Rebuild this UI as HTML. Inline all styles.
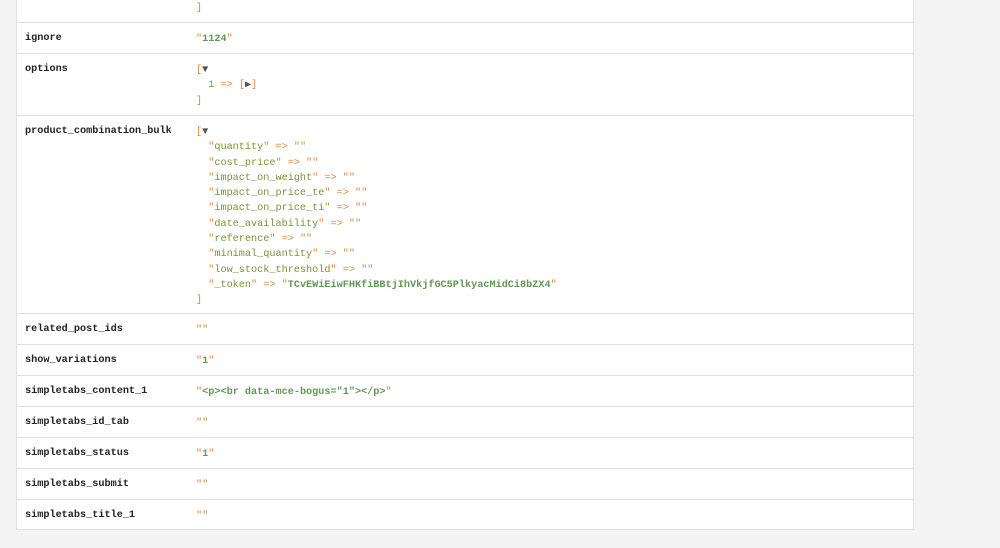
<!DOCTYPE html>
<html><head><style>
body{margin:0;width:1000px;height:548px;background:#f3f3f3;position:relative;overflow:hidden;font-family:"Liberation Mono",monospace;font-size:10.2px;}
.t{position:absolute;left:16px;top:-1px;width:896px;height:530px;background:#fff;border:1px solid #e2e2e2;border-top:none;}
.r{position:absolute;left:0;width:896px;border-top:1px solid #e2e2e2;}
.k{position:absolute;left:8px;font-weight:bold;color:#222;}
.v{position:absolute;left:179px;line-height:15.3px;color:#d9883f;white-space:pre;}
.s{color:#629755;font-weight:bold}
.ks{color:#789339}
.i{color:#6a9f3b}
.a{color:#555}
</style></head><body>
<div class="t">
<div class="v" style="top:2px">]</div>
<div class="r" style="top:23px;height:31px"><div class="k" style="top:10px">ignore</div><div class="v" style="top:9px">"<span class="s">1124</span>"</div></div>
<div class="r" style="top:54px;height:62px"><div class="k" style="top:10px">options</div><div class="v" style="top:9px">[<span class="a">▼</span>
  <span class="i">1</span> => [<span class="a">▶</span>]
]</div></div>
<div class="r" style="top:116px;height:198px"><div class="k" style="top:10px">product_combination_bulk</div><div class="v" style="top:9px">[<span class="a">▼</span>
  "<span class="ks">quantity</span>" => ""
  "<span class="ks">cost_price</span>" => ""
  "<span class="ks">impact_on_weight</span>" => ""
  "<span class="ks">impact_on_price_te</span>" => ""
  "<span class="ks">impact_on_price_ti</span>" => ""
  "<span class="ks">date_availability</span>" => ""
  "<span class="ks">reference</span>" => ""
  "<span class="ks">minimal_quantity</span>" => ""
  "<span class="ks">low_stock_threshold</span>" => ""
  "<span class="ks">_token</span>" => "<span class="s">TCvEWiEiwFHKfiBBtjIhVkjfGC5PlkyacMidCi8bZX4</span>"
]</div></div>
<div class="r" style="top:314px;height:31px"><div class="k" style="top:10px">related_post_ids</div><div class="v" style="top:9px">""</div></div>
<div class="r" style="top:345px;height:31px"><div class="k" style="top:10px">show_variations</div><div class="v" style="top:9px">"<span class="s">1</span>"</div></div>
<div class="r" style="top:376px;height:31px"><div class="k" style="top:10px">simpletabs_content_1</div><div class="v" style="top:9px">"<span class="s">&lt;p&gt;&lt;br data-mce-bogus="1"&gt;&lt;/p&gt;</span>"</div></div>
<div class="r" style="top:407px;height:31px"><div class="k" style="top:10px">simpletabs_id_tab</div><div class="v" style="top:9px">""</div></div>
<div class="r" style="top:438px;height:31px"><div class="k" style="top:10px">simpletabs_status</div><div class="v" style="top:9px">"<span class="s">1</span>"</div></div>
<div class="r" style="top:469px;height:31px"><div class="k" style="top:10px">simpletabs_submit</div><div class="v" style="top:9px">""</div></div>
<div class="r" style="top:500px;height:30px"><div class="k" style="top:10px">simpletabs_title_1</div><div class="v" style="top:9px">""</div></div>
</div>
</body></html>
